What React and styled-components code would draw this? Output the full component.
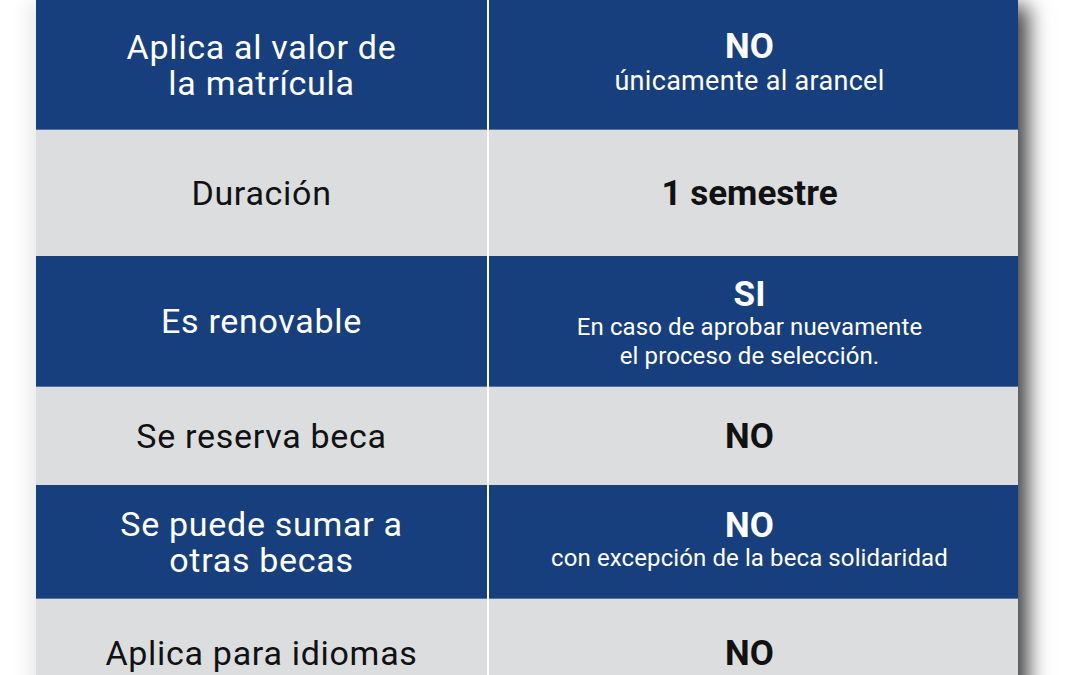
import React from "react";
import styled, { createGlobalStyle } from "styled-components";

const Global = createGlobalStyle`
  html, body { margin: 0; padding: 0; background: #ffffff; }
  body { font-family: Roboto, "Liberation Sans", Arial, sans-serif; overflow: hidden; }
`;

const Page = styled.div`
  width: 1080px;
  height: 675px;
  overflow: hidden;
  padding-left: 36px;
  box-sizing: border-box;
`;

const Table = styled.div`
  width: 982px;
  display: flex;
  flex-direction: column;
  background: #ffffff;
  box-shadow: 16px 0 20px -6px rgba(0, 0, 0, 0.75), -8px 0 18px rgba(0, 0, 0, 0.08);
`;

const Row = styled.div`
  display: grid;
  grid-template-columns: 451px 529px;
  column-gap: 2px;
  height: ${(p) => p.$h}px;
`;

const Cell = styled.div`
  background: ${(p) => (p.$blue ? "#173f7d" : "#dcdddf")};
  color: ${(p) => (p.$blue ? "#ffffff" : "#111111")};
  border-bottom: ${(p) => (p.$blue ? "1px solid #5673a3" : "none")};
  box-sizing: border-box;
  display: flex;
  flex-direction: column;
  align-items: center;
  justify-content: center;
  text-align: center;
  padding-top: ${(p) => Math.max(p.$shift || 0, 0)}px;
  padding-bottom: ${(p) => Math.max(-(p.$shift || 0), 0)}px;
  padding-right: ${(p) => (p.$right ? 8 : 0)}px;
`;

const Label = styled.div`
  font-size: 34px;
  line-height: 36px;
  letter-spacing: 0.7px;
`;

const Answer = styled.div`
  font-size: 35px;
  font-weight: 700;
  line-height: 37px;
`;

const Note = styled.div`
  font-size: ${(p) => (p.$big ? 27 : 24)}px;
  line-height: ${(p) => (p.$big ? 33 : 29)}px;
  letter-spacing: ${(p) => (p.$big ? 0.3 : 0.1)}px;
`;

const rows = [
  { h: 130, label: ["Aplica al valor de", "la matrícula"], answer: "NO", note: ["únicamente al arancel"], big: true, shift: -3 },
  { h: 126, label: ["Duración"], answer: "1 semestre", note: [] },
  { h: 131, label: ["Es renovable"], answer: "SI", note: ["En caso de aprobar nuevamente", "el proceso de selección."], shift: 4 },
  { h: 98, label: ["Se reserva beca"], answer: "NO", note: [] },
  { h: 114, label: ["Se puede sumar a", "otras becas"], answer: "NO", note: ["con excepción de la beca solidaridad"], shift: -3 },
  { h: 108, label: ["Aplica para idiomas"], answer: "NO", note: [] },
];

export default function App() {
  return (
    <Page>
      <Global />
      <Table>
        {rows.map((r, i) => {
          const blue = i % 2 === 0;
          return (
            <Row key={i} $h={r.h}>
              <Cell $blue={blue}>
                <Label>
                  {r.label.map((l, j) => (
                    <React.Fragment key={l}>
                      {j > 0 && <br />}
                      {l}
                    </React.Fragment>
                  ))}
                </Label>
              </Cell>
              <Cell $blue={blue} $right $shift={r.shift}>
                <Answer>{r.answer}</Answer>
                {r.note.map((n) => (
                  <Note key={n} $big={r.big}>
                    {n}
                  </Note>
                ))}
              </Cell>
            </Row>
          );
        })}
      </Table>
    </Page>
  );
}
